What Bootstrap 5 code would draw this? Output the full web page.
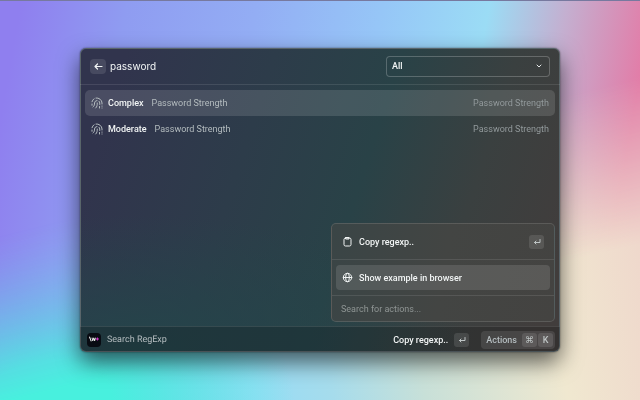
<!DOCTYPE html>
<html lang="en">
<head>
<meta charset="utf-8">
<meta name="viewport" content="width=device-width, initial-scale=1">
<title>Search RegExp</title>
<link href="https://cdn.jsdelivr.net/npm/bootstrap@5.3.0/dist/css/bootstrap.min.css" rel="stylesheet">
<style>
body {
  font-family: Roboto, "Liberation Sans", sans-serif;
  font-size: 9px;
  line-height: 12px;
  color: #f2f5f5;
  text-rendering: geometricPrecision;
  box-shadow: inset 0 1px #77799f;
  background: linear-gradient(100deg, #8f7fef 3%, #8f9cf1 18%, #93adf4 36%, #96c6f7 54%, #9bdcf5 69%, #c4afd0 80%, #e27da8 92%);
}
body::before {
  content: "";
  position: fixed; inset: 1px 0 0; z-index: -1;
  background:
    radial-gradient(ellipse 38% 40% at 8% 100%, #48f0de 25%, #48f0de00 100%),
    linear-gradient(80deg, #78b8ee 5%, #97dcf6 36%, #a6dcec 47%, #c8e0d8 60%, #f0e8d0 80%, #efd8cc 94%);
  -webkit-mask-image: linear-gradient(166deg, #0000 42%, #0008 58%, #000 72%);
  mask-image: linear-gradient(166deg, #0000 42%, #0008 58%, #000 72%);
}
.launcher {
  width: 75%;
  min-height: 76vh;
  border-radius: 6px;
  background:
    radial-gradient(ellipse 70% 45% at 12% 100%, #24454a 0%, #24454a00 100%),
    linear-gradient(108deg, #31344d 8%, #2d3c4a 34%, #294247 56%, #3a4040 76%, #413d3c 95%);
  box-shadow: inset 0 0 0 1px #59656a, 0 0 2px #0008, 0 10px 22px #0009;
}
button { font: inherit; color: inherit; border: 0; background: none; }
svg { display: block; flex: none; fill: none; stroke: currentColor; stroke-linecap: round; stroke-linejoin: round; }
.hairline { border-color: #ffffff1a !important; }
.topbar { height: 37px; padding: 0 10px; }
.back { width: 16px; height: 15px; border-radius: 4px; background: #ffffff1c; }
.query, .action-search { font: inherit; color: inherit; background: none; border: 0; outline: 0; min-width: 0; }
.query { font-family: Inter, "Liberation Sans", sans-serif; font-size: 10px; line-height: 16px; }
.scope {
  width: 164px; height: 21px;
  padding: 0 24px 0 5px;
  font-size: 9px; line-height: 12px; font-weight: 500;
  color: #f2f5f5;
  border: 1px solid #ffffff38; border-radius: 4px;
  background-color: transparent;
  background-image: url("data:image/svg+xml,%3Csvg xmlns='http://www.w3.org/2000/svg' viewBox='0 0 8 8'%3E%3Cpath d='M2 3l2 2 2-2' fill='none' stroke='%23e6eaea' stroke-linecap='round' stroke-linejoin='round'/%3E%3C/svg%3E");
  background-size: 8px 8px; background-position: right 6px center;
}
.scope option { color: #222; }
.results { padding: 5px 5px; }
.result { height: 26px; padding: 0 6px; border-radius: 5px; }
.result svg { margin-right: 5px; }
.result .name { margin-right: 8px; }
.result:first-child { background: #ffffff20; }
.quiet { color: #b4bcbf; }
.faint { color: #92999b; }
.name { font-weight: 500; }
.actions-menu {
  right: 5px; bottom: 30px; width: 224px;
  border: 1px solid #ffffff20; border-radius: 5px;
  background: linear-gradient(100deg, #3a4546, #434543 50%, #444341);
}
.menu-group { padding: 5px 4px; }
.menu-item { height: 25px; padding: 0 6px; border-radius: 4px; gap: 6px; }
.menu-item.chosen { background: #ffffff1e; }
.action-search { height: 25px; padding: 0 9px; }
.action-search::placeholder { color: #8f9594; opacity: 1; }
.key { width: 15px; height: 14px; border-radius: 3px; background: #ffffff1c; color: #bfc5c5; font: inherit; padding: 0; }
.bottombar { height: 26px; padding: 0 5px 0 7px; background: #0000002e; border-radius: 0 0 6px 6px; }
.app-logo { width: 14px; height: 14px; margin-right: 6px; border-radius: 4px; background: #080b12; font-size: 6px; line-height: 13px; font-weight: 800; color: #fff; overflow: hidden; }
.app-logo i { font-style: normal; color: #e43bd8; }
.copy { gap: 6px; margin-right: 12px; }
.open-actions { height: 18px; padding: 0 2px 0 5px; border-radius: 4px; background: #ffffff1a; gap: 1px; font-weight: 500; }
</style>
<script src="https://cdn.jsdelivr.net/npm/bootstrap@5.3.0/dist/js/bootstrap.bundle.min.js"></script>
</head>
<body class="min-vh-100 d-flex align-items-center justify-content-center">
<svg width="0" height="0" class="position-absolute" aria-hidden="true">
  <symbol id="finger" viewBox="0 0 24 24">
    <path d="M2 9.500A10.500 10.500 0 0 1 6 3.500M10 2a10.500 10.500 0 0 1 12 10v2M2 14v2.500M4 20c3-2 3-5 3-8A5.500 5.500 0 0 1 12 7M16 8.500a5.500 5.500 0 0 1 1.500 3.500v3M9.500 22c3-3 3-6 3-10M17 19v3M22 18v.5M22 22v.1"/>
  </symbol>
  <symbol id="enter" viewBox="0 0 10 10"><path d="M8 2.500v3H2.500M4 4L2.500 5.500 4 7"/></symbol>
</svg>
<main class="launcher position-relative d-flex flex-column">
  <header class="topbar d-flex align-items-center border-bottom hairline">
    <button class="back d-flex align-items-center justify-content-center p-0" type="button" aria-label="Back">
      <svg width="11" height="11" viewBox="0 0 11 11" stroke-width="1.200"><path d="M9 5.500H2M4.500 3L2 5.500 4.500 8"/></svg>
    </button>
    <input class="query flex-grow-1 px-1" type="text" value="password" aria-label="Search">
    <select class="scope form-select" aria-label="Category"><option>All</option><option>Password Strength</option></select>
  </header>

  <section class="results flex-grow-1 d-flex flex-column">
    <button class="result d-flex align-items-center" type="button">
      <svg class="quiet" width="12" height="12" stroke-width="2"><use href="#finger"/></svg>
      <span class="name">Complex</span><span class="quiet">Password Strength</span>
      <span class="faint ms-auto">Password Strength</span>
    </button>
    <button class="result d-flex align-items-center" type="button">
      <svg class="quiet" width="12" height="12" stroke-width="2"><use href="#finger"/></svg>
      <span class="name">Moderate</span><span class="quiet">Password Strength</span>
      <span class="faint ms-auto">Password Strength</span>
    </button>
  </section>

  <footer class="bottombar d-flex align-items-center border-top hairline">
    <span class="app-logo d-flex justify-content-center">\w<i>+</i></span>
    <span class="quiet">Search RegExp</span>
    <button class="copy name d-flex align-items-center ms-auto p-0" type="button">Copy regexp..
      <kbd class="key d-flex align-items-center justify-content-center"><svg width="10" height="10"><use href="#enter"/></svg></kbd>
    </button>
    <button class="open-actions quiet d-flex align-items-center" type="button"><span class="me-1">Actions</span>
      <kbd class="key d-flex align-items-center justify-content-center">⌘</kbd>
      <kbd class="key d-flex align-items-center justify-content-center">K</kbd>
    </button>
  </footer>

  <div class="actions-menu position-absolute">
    <div class="menu-group border-bottom hairline">
      <button class="menu-item name w-100 d-flex align-items-center" type="button">
        <svg width="11" height="11" viewBox="0 0 11 11"><rect x="2" y="2" width="7" height="8" rx="1.500"/><path d="M4 1.500h3V3H4z"/></svg>
        Copy regexp..
        <kbd class="key d-flex align-items-center justify-content-center ms-auto"><svg width="10" height="10"><use href="#enter"/></svg></kbd>
      </button>
    </div>
    <div class="menu-group border-bottom hairline">
      <button class="menu-item chosen name w-100 d-flex align-items-center" type="button">
        <svg width="11" height="11" viewBox="0 0 11 11"><circle cx="5.500" cy="5.500" r="4.200"/><ellipse cx="5.500" cy="5.500" rx="1.900" ry="4.200"/><path d="M1.300 5.500h8.400"/></svg>
        Show example in browser
      </button>
    </div>
    <input class="action-search w-100 d-block" type="text" placeholder="Search for actions..." aria-label="Search for actions">
  </div>
</main>
</body>
</html>
